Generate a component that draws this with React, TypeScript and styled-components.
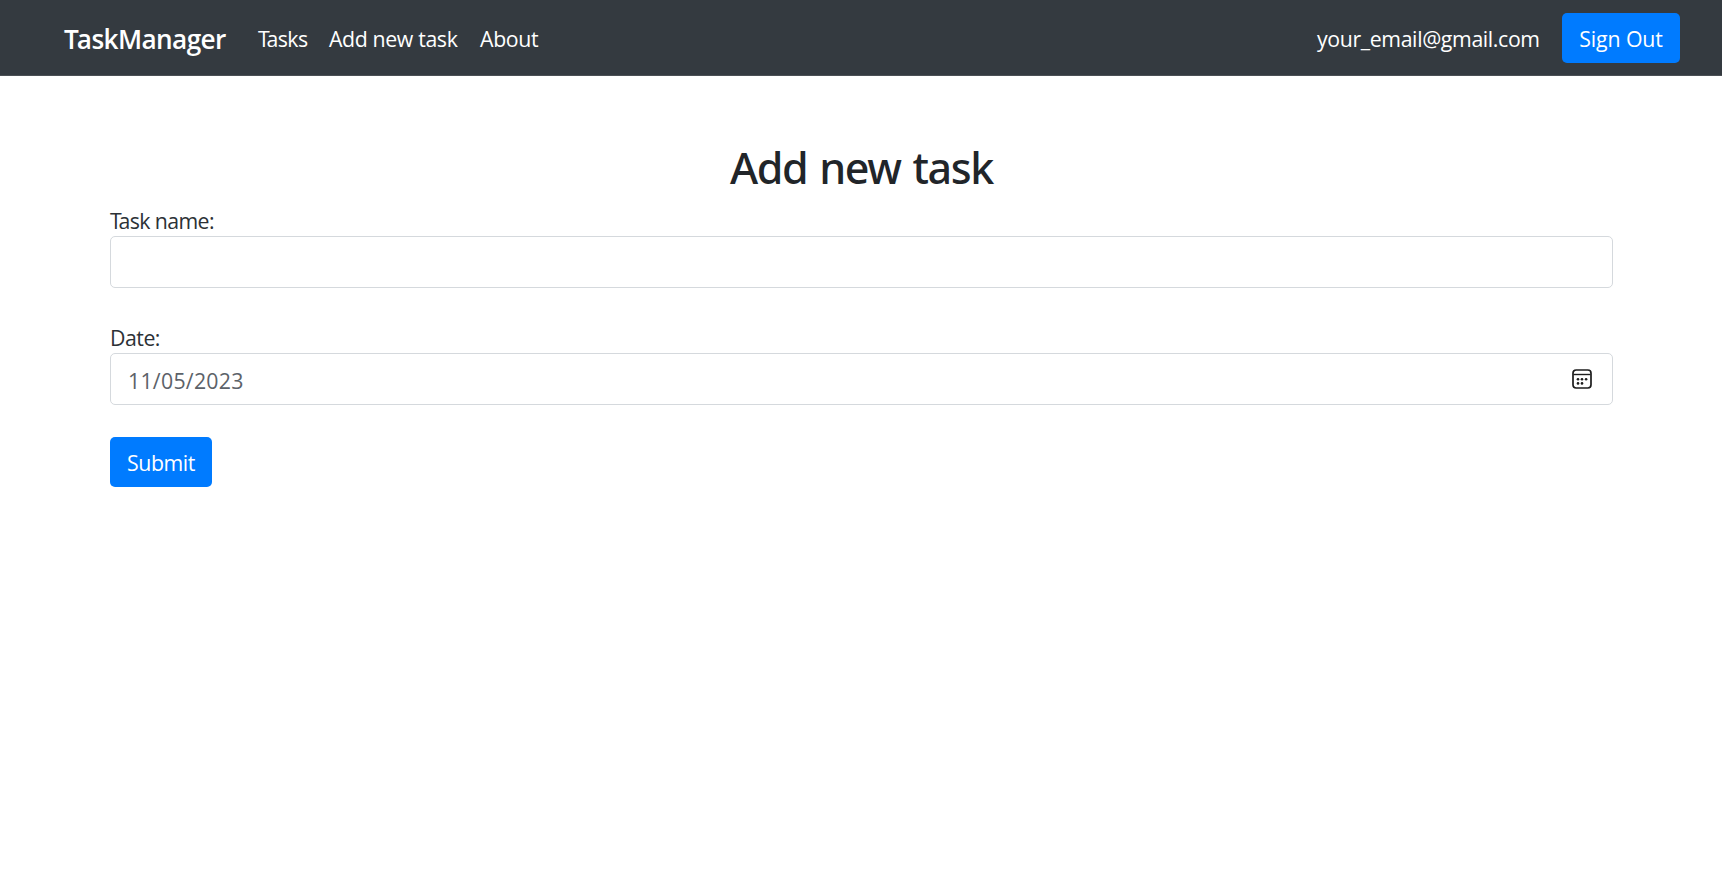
import React from 'react';
import styled, { createGlobalStyle } from 'styled-components';

const GlobalStyle = createGlobalStyle`
  *, *::before, *::after { box-sizing: border-box; }
  body {
    margin: 0;
    background: #fff;
    color: #212529;
    font-family: "Open Sans", "Noto Sans", sans-serif;
    font-size: 21.3px;
    line-height: 32px;
    font-kerning: normal;
  }
`;

const Navbar = styled.nav`
  display: flex;
  align-items: center;
  height: 76px;
  padding: 0 42px 0 64px;
  background: #343a40;
  box-shadow: inset 0 -1px #4b5055;
  color: #fff;
`;

const Brand = styled.a`
  width: 194px;
  padding-top: 2px;
  font-size: 26.2px;
  font-weight: 600;
  letter-spacing: -0.6px;
  white-space: nowrap;
  &::first-letter { letter-spacing: -2px; }
`;

const NavLinks = styled.div`
  display: flex;
  flex: 1;
`;

const NavLink = styled.a<{ $width: number; $tracking: number; $lead?: number }>`
  width: ${(p) => p.$width}px;
  padding-top: 2px;
  letter-spacing: ${(p) => p.$tracking}px;
  white-space: nowrap;
  &::first-letter { letter-spacing: ${(p) => p.$lead ?? p.$tracking}px; }
`;

const Email = styled.span`
  width: 245px;
  padding-top: 2px;
  letter-spacing: -0.37px;
  white-space: nowrap;
`;

const Button = styled.button<{ $width: number; $tracking: number }>`
  display: flex;
  justify-content: center;
  width: ${(p) => p.$width}px;
  height: 50px;
  padding: 10px 0 0;
  border: 0;
  border-radius: 5px;
  background: #007bff;
  color: #fff;
  font: inherit;
  letter-spacing: ${(p) => p.$tracking}px;
  white-space: nowrap;
`;

const Content = styled.main`
  padding: 67px 109px 0 110px;
`;

const Title = styled.h1`
  margin: 0;
  height: 62px;
  font-family: "Noto Sans", "Open Sans", sans-serif;
  font-size: 43px;
  font-weight: 500;
  line-height: 50px;
  letter-spacing: -1.35px;
  word-spacing: 2px;
  text-align: center;
`;

const Form = styled.form`
  display: flex;
  flex-direction: column;
  align-items: flex-start;
`;

const Field = styled.div`
  width: 100%;
  margin-bottom: 32px;
  & + & { margin: 2px 0 32px; }
`;

const Label = styled.label<{ $tracking: number; $lead?: number }>`
  display: block;
  height: 31px;
  color: #2c3136;
  letter-spacing: ${(p) => p.$tracking}px;
  &::first-letter { letter-spacing: ${(p) => p.$lead ?? p.$tracking}px; }
`;

const Control = styled.div`
  display: flex;
  align-items: center;
  justify-content: space-between;
  height: 52px;
  padding: 0 20px 0 17px;
  border: 1px solid #d5d9dd;
  border-radius: 5px;
  color: #5c6269;
`;

const DateText = styled.span`
  padding-top: 3px;
  letter-spacing: 0.26px;
`;

const CalendarIcon = () => (
  <svg width="20" height="20" viewBox="0 0 20 20" fill="none">
    <rect x="1" y="1" width="18" height="18" rx="3.2" stroke="#1c1c1c" strokeWidth="1.7" />
    <path d="M1.5 5.5h17" stroke="#1c1c1c" strokeWidth="1.4" />
    <g fill="#1c1c1c">
      <circle cx="6" cy="10.3" r="1.3" />
      <circle cx="10" cy="10.3" r="1.3" />
      <circle cx="14.1" cy="10.3" r="1.3" />
      <circle cx="6" cy="14.4" r="1.3" />
      <circle cx="10" cy="14.4" r="1.3" />
    </g>
  </svg>
);

export default function App() {
  return (
    <>
      <GlobalStyle />
      <Navbar>
        <Brand>TaskManager</Brand>
        <NavLinks>
          <NavLink $width={71} $tracking={-0.55} $lead={-3.3}>Tasks</NavLink>
          <NavLink $width={151} $tracking={-0.37}>Add new task</NavLink>
          <NavLink $width={70} $tracking={-0.32}>About</NavLink>
        </NavLinks>
        <Email>your_email@gmail.com</Email>
        <Button $width={118} $tracking={-0.1}>Sign Out</Button>
      </Navbar>
      <Content>
        <Title>Add new task</Title>
        <Form>
          <Field>
            <Label $tracking={-0.6} $lead={-3.3}>Task name:</Label>
            <Control />
          </Field>
          <Field>
            <Label $tracking={-0.5}>Date:</Label>
            <Control>
              <DateText>11/05/2023</DateText>
              <CalendarIcon />
            </Control>
          </Field>
          <Button type="button" $width={102} $tracking={-0.4}>Submit</Button>
        </Form>
      </Content>
    </>
  );
}
